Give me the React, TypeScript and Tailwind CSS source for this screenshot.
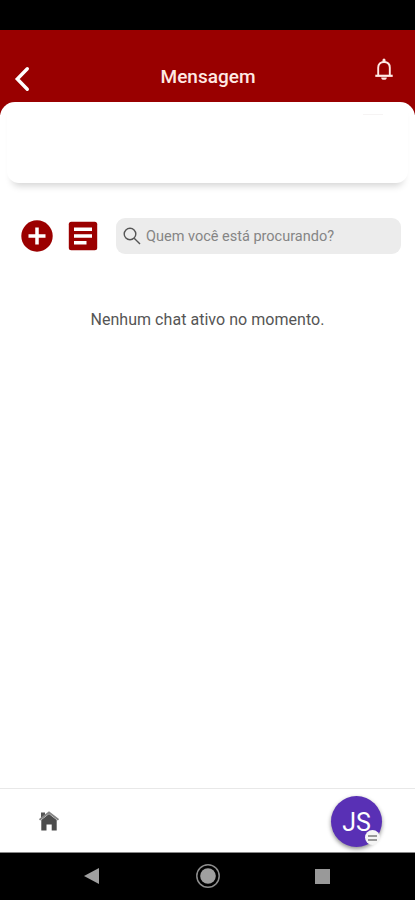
import React from "react";

function BackIcon() {
  return (
    <svg width="16" height="26" viewBox="0 0 16 26" fill="none" stroke="#fff" strokeWidth="3.4">
      <path d="M13.300 2.800 3.300 13 13.300 23.200" strokeLinecap="round" strokeLinejoin="miter" />
    </svg>
  );
}

function BellIcon() {
  return (
    <svg width="20" height="24" viewBox="0 0 20 24" fill="none" stroke="#ffeae6" strokeWidth="1.9">
      <path d="M10 2v1.500" strokeWidth="3" strokeLinecap="round" />
      <path d="M4.200 17V9.700C4.200 6 6.500 4 10 4s5.800 2 5.800 5.700V17" />
      <path d="M1.300 17.800h17.400" strokeWidth="2.200" />
      <path d="M7.200 19.500h5.600a2.800 2.300 0 0 1-5.600 0z" fill="#ffeae6" stroke="none" />
    </svg>
  );
}

function HomeIcon() {
  return (
    <svg width="20" height="20" viewBox="0 0 20 20">
      <path d="M2 1.500H6V5L2 8z" fill="#555" />
      <path d="M2.300 9 10 3l7.700 6v10.500h-5V13.500H7.500v6H2.300z" fill="#4c4c4c" />
      <path d="M.5 8.800 10 1.500l9.500 7.300" fill="none" stroke="#858585" strokeWidth="2" />
    </svg>
  );
}

export default function App() {
  return (
    <div className="flex h-[900px] w-[415px] flex-col overflow-hidden bg-white font-[Roboto,sans-serif]">
      <div className="h-[30px] shrink-0 bg-black" />
      <header className="flex h-[85px] shrink-0 justify-between bg-[#990000] px-[14px]">
        <div className="w-10 pt-[36px]"><BackIcon /></div>
        <h1 className="pt-[33px] pl-[1px] text-[19px] leading-7 font-medium whitespace-nowrap text-[#ffe9e4]">Mensagem</h1>
        <div className="flex w-10 justify-end pt-[28px] pr-[7px]"><BellIcon /></div>
      </header>

      <main className="z-10 -mt-[13px] flex min-h-0 flex-1 flex-col rounded-t-[15px] bg-white">
        <div className="mx-[7px] flex h-[81px] shrink-0 items-start justify-end rounded-b-[12px] pt-3 pr-[25px] shadow-[0_8px_7px_-5px_rgba(0,0,0,0.17)]">
          <div className="h-px w-5 bg-[#f6f4f4]" />
        </div>

        <div className="mt-[35px] flex h-[36px] shrink-0 items-center pr-[14px] pl-[21px]">
          <svg width="32" height="32" viewBox="0 0 32 32" className="shrink-0">
            <circle cx="16" cy="16" r="15.700" fill="#9b0000" />
            <path d="M16 7.500v17M7.500 16h17" stroke="#fff" strokeWidth="3.500" />
          </svg>
          <svg width="30" height="30" viewBox="0 0 30 30" className="ml-[15px] shrink-0">
            <rect x=".8" y=".8" width="28.400" height="28.400" rx="2.500" fill="#9b0000" />
            <path d="M6 8.300h18M6 15h18M6 21.700h12.500" stroke="#fff" strokeWidth="3.500" />
          </svg>
          <div className="ml-[18px] flex h-[36px] flex-1 items-center rounded-[9px] bg-[#ececec] pl-[7px]">
            <svg width="18" height="18" viewBox="0 0 18 18" fill="none" stroke="#555" strokeWidth="1.400" className="shrink-0">
              <circle cx="7" cy="7" r="5.800" />
              <path d="m11.200 11.200 5.800 5.800" />
            </svg>
            <span className="ml-[5px] pt-[2px] text-[14.500px] leading-5 whitespace-nowrap text-[#858585]">Quem você está procurando?</span>
          </div>
        </div>

        <p className="mt-[54px] text-center text-[16px] leading-6 tracking-[0.04px] text-[#555]">Nenhum chat ativo no momento.</p>
      </main>

      <footer className="flex h-[64px] shrink-0 items-start justify-between border-t border-[#e8e8e8] bg-white pr-[33px] pl-[39px]">
        <div className="pt-[22px]"><HomeIcon /></div>
        <div className="relative mt-[7px] flex size-[51px] items-center justify-center rounded-full bg-[#5930b5] shadow-[0_2px_4px_rgba(0,0,0,0.45)]">
          <span className="pt-[2px] text-[25px] leading-none text-white">JS</span>
          <span className="absolute right-[2px] bottom-[2px] flex size-[15px] flex-col items-center justify-center gap-[2px] rounded-full bg-[#f5f5f5]">
            <i className="h-[2px] w-[9px] bg-[#999]" />
            <i className="h-[2px] w-[9px] bg-[#999]" />
          </span>
        </div>
      </footer>
      <nav className="flex h-[48px] shrink-0 items-center justify-between border-t border-[#888] bg-black pr-[85px] pb-[2px] pl-[84px]">
        <svg width="16" height="18" viewBox="0 0 16 18"><path d="M0 9 15 1v16z" fill="#a0a0a0" /></svg>
        <svg width="26" height="26" viewBox="0 0 26 26">
          <circle cx="13" cy="13" r="11.200" fill="none" stroke="#8c8c8c" strokeWidth="1.500" />
          <circle cx="13" cy="13" r="7.800" fill="#a0a0a0" />
        </svg>
        <span className="mt-[2px] size-[15px] bg-[#999]" />
      </nav>
    </div>
  );
}
